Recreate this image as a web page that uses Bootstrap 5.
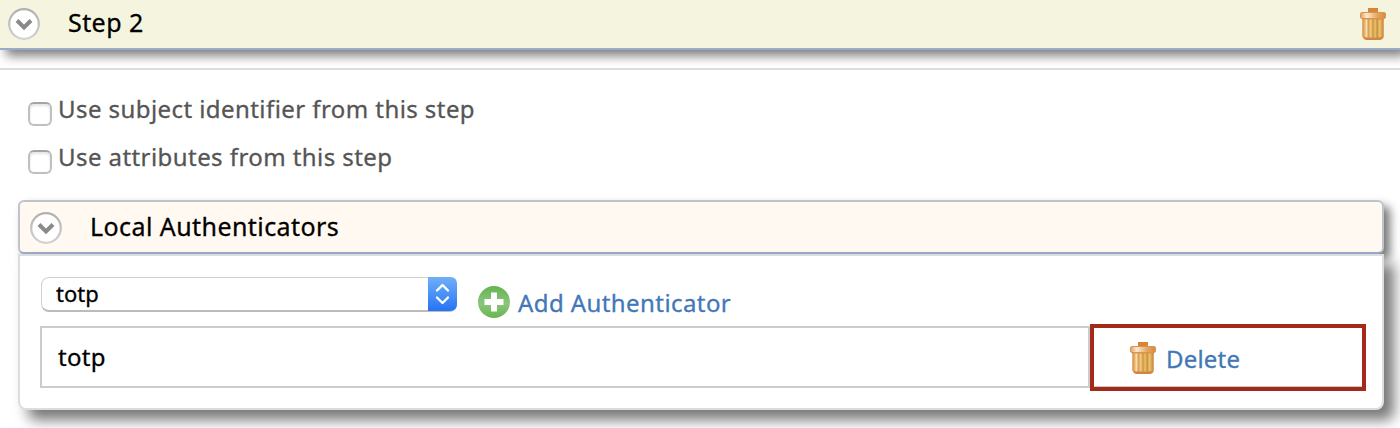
<!DOCTYPE html>
<html lang="en">
<head>
<meta charset="utf-8">
<title>Authentication steps</title>
<link href="https://cdn.jsdelivr.net/npm/bootstrap@5.3.0/dist/css/bootstrap.min.css" rel="stylesheet">
<style>
body{font-family:"Noto Sans","Open Sans",sans-serif;font-size:24px;line-height:32px;color:#000;background:#fff;height:428px;overflow:hidden;-webkit-text-stroke:.3px}
svg{display:block;flex:none}
.step-head{height:50px;background:#f4f4df;border-bottom:2px solid #9aaacb;box-shadow:6px 6px 10px #808080;padding:0 12px 0 8px}
.step-body{margin-top:18px;border-top:2px solid #ddd;padding:30px 16px 0 18px}
.title{font-size:25px;letter-spacing:.43px;margin:-5px 0 0 28px}
.opt{height:48px;padding-left:10px;color:#555;letter-spacing:.43px}
.opt .form-check-input{width:24px;height:24px;margin:2px 6px 0 0;border:2px solid #c0c0c0;border-top-color:#a5a5a5;border-radius:6px;box-shadow:inset 0 2px 3px #e4e4e4;flex:none}
.opt label{margin-top:-7px}
.auth-head{height:54px;margin-top:4px;border:2px solid #c0c3c8;border-bottom-color:#9aaacb;border-radius:6px;background:#fff9f1;box-shadow:6px 6px 10px #777;padding:2px 0 0 10px}
.auth-body{position:relative;height:156px;border:2px solid #ddd;border-radius:0 0 8px 8px;background:#fff;box-shadow:10px 10px 14px #777;padding:21px 16px 0 20px}
.picker{width:416px;height:35px;margin-left:1px;border:1px solid #d0d0d0;border-bottom:2px solid #bbb;border-radius:8px;font-size:22px;line-height:30px;padding-left:14px;position:relative}
.picker svg{position:absolute;right:-1px;top:-1px}
.link{color:#4277b8}
.add{margin:9px 0 0 21px;letter-spacing:.42px}
.add span{position:relative;top:1px}
.rows{height:62px;margin-top:8px;border:2px solid #ccc}
.rows .name{width:1048px;border-right:2px solid #ccc;padding-left:16px;letter-spacing:.3px}
.del{width:276px;height:67px;margin:-4px -2px 0 0;border:4px solid #a32a18;padding-left:36px;background:#fff;box-shadow:inset 0 -1px #ccc}
.del .link{margin:2px 0 0 8px;letter-spacing:.2px}
.t{white-space:nowrap}
</style>
</head>
<body>
<svg width="0" height="0" class="position-absolute">
<defs>
<linearGradient id="wood"><stop offset="0" stop-color="#cf8a42"/><stop offset=".12" stop-color="#edb870"/><stop offset=".2" stop-color="#f8e0b4"/><stop offset=".28" stop-color="#dc9c4c"/><stop offset=".4" stop-color="#f0ce86"/><stop offset=".5" stop-color="#cf943f"/><stop offset=".6" stop-color="#e8c46c"/><stop offset=".7" stop-color="#c98e3e"/><stop offset=".8" stop-color="#e9c66e"/><stop offset="1" stop-color="#cd7d38"/></linearGradient>
<linearGradient id="lid"><stop offset="0" stop-color="#e0a060"/><stop offset=".25" stop-color="#fbe9d4"/><stop offset=".65" stop-color="#e5a763"/><stop offset="1" stop-color="#dc8a3e"/></linearGradient>
<linearGradient id="blue" x2="0" y2="1"><stop offset="0" stop-color="#72aff8"/><stop offset="1" stop-color="#2473f5"/></linearGradient>
<linearGradient id="green" x2="0" y2="1"><stop offset="0" stop-color="#64b450"/><stop offset=".55" stop-color="#8cc57c"/><stop offset="1" stop-color="#66b64f"/></linearGradient>
<linearGradient id="ring" x2="0" y2="1"><stop offset="0" stop-color="#b0b0b0"/><stop offset="1" stop-color="#d2d2d2"/></linearGradient>
<symbol id="trash" viewBox="0 0 26 32"><path d="M8 5V0h10v5z" fill="#d98536"/><path d="M2.300 9h21.400v20q-1 3-4 3H7q-3 0-4-3L2.300 29z" fill="url(#wood)"/><path d="M3 29q10 1.500 20 0-1 3-4 3H7q-3 0-4-3z" fill="#d08544"/><path d="M2.300 10h21.400v1.500H2.300z" fill="#c9803b" opacity=".6"/><rect x=".5" y="4.500" width="25" height="6" rx="1.500" fill="url(#lid)" stroke="#dc9450" stroke-width="1"/></symbol>
<symbol id="toggle" viewBox="0 0 32 32"><circle cx="16" cy="16" r="14.800" fill="#fff" stroke="url(#ring)" stroke-width="2.200"/><path d="M9 12.500l7 7 7-7" fill="none" stroke="#8a8a8a" stroke-width="4"/></symbol>
</defs>
</svg>
<header class="step-head d-flex align-items-center">
<svg width="32" height="32"><use href="#toggle"/></svg>
<span class="t title">Step 2</span>
<svg class="ms-auto" width="28" height="32" viewBox="0 0 28 32"><use href="#trash" width="26" height="32"/></svg>
</header>
<main class="step-body">
<div class="opt d-flex align-items-start"><input class="form-check-input" type="checkbox" id="subj"><label class="t" for="subj">Use subject identifier from this step</label></div>
<div class="opt d-flex align-items-start"><input class="form-check-input" type="checkbox" id="attr"><label class="t" for="attr">Use attributes from this step</label></div>
<div class="auth-head d-flex align-items-center">
<svg width="32" height="32"><use href="#toggle"/></svg>
<span class="t title">Local Authenticators</span>
</div>
<section class="auth-body">
<div class="d-flex align-items-start">
<div class="picker">totp<svg width="29" height="34"><path d="M0 0h22q7 0 7 7v20q0 7-7 7H0z" fill="url(#blue)"/><path d="M9 13.500l5.500-5.500 5.500 5.500M9 20.500l5.500 5.500 5.500-5.500" fill="none" stroke="#fff" stroke-width="2.400" stroke-linecap="round" stroke-linejoin="round"/></svg></div>
<a class="add link d-flex align-items-center text-decoration-none" href="#"><svg width="32" height="32"><circle cx="16" cy="16" r="16" fill="url(#green)"/><path d="M16 6.500v19M6.500 16h19" stroke="#fff" stroke-width="6"/></svg><span class="t ms-2">Add Authenticator</span></a>
</div>
<div class="rows d-flex">
<div class="name d-flex align-items-center">totp</div>
<div class="del d-flex align-items-center ms-auto"><svg width="28" height="32" viewBox="0 0 28 32"><use href="#trash" width="26" height="32"/></svg><a href="#" class="t link text-decoration-none">Delete</a></div>
</div>
</section>
</main>
<script src="https://cdn.jsdelivr.net/npm/bootstrap@5.3.0/dist/js/bootstrap.bundle.min.js"></script>
</body>
</html>
